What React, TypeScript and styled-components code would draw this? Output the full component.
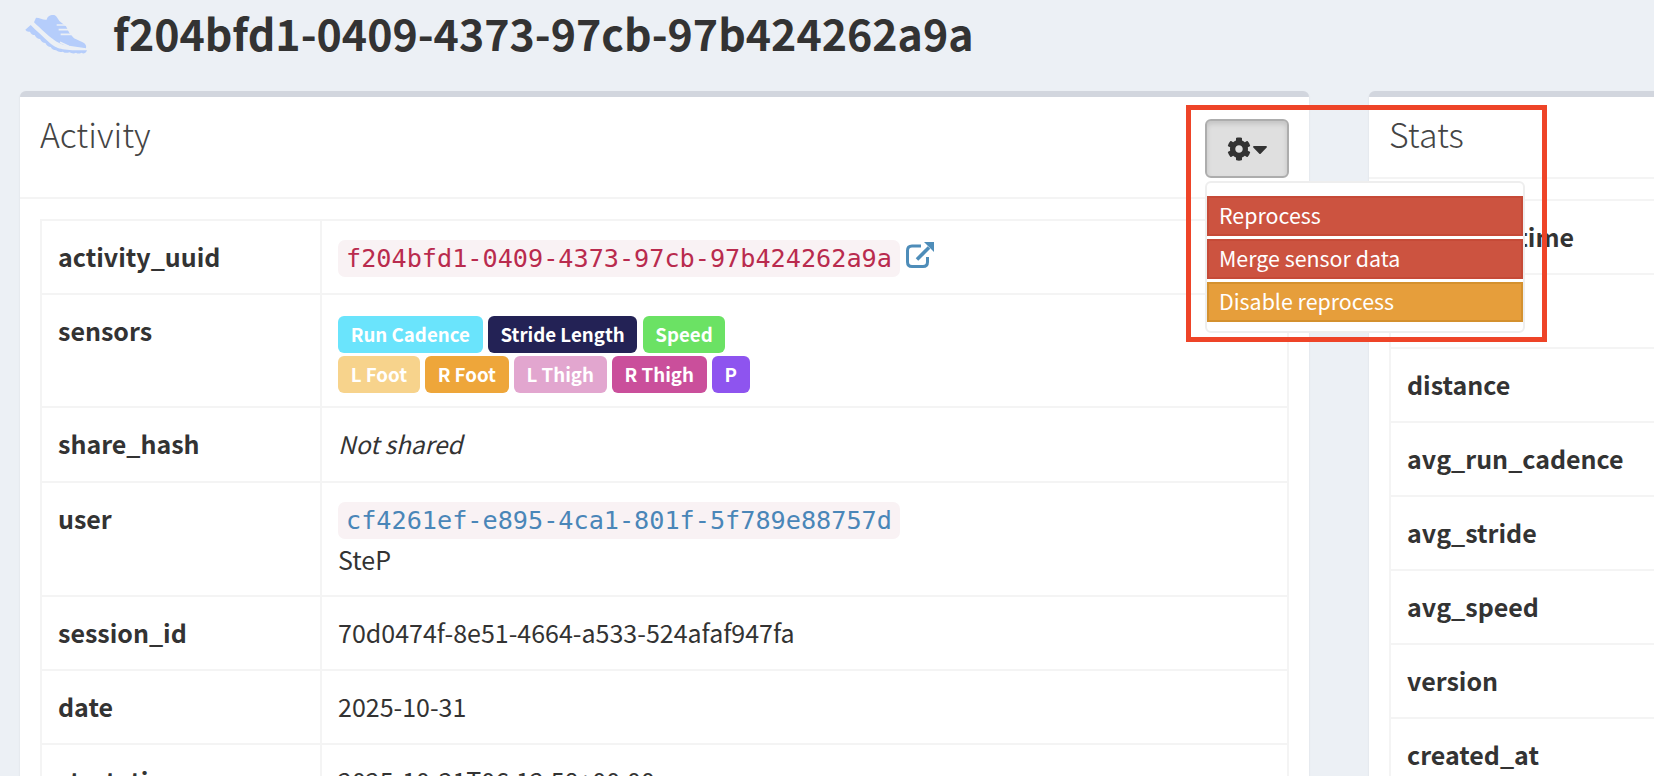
import React from "react";
import styled, { createGlobalStyle } from "styled-components";
import { FaCog, FaCaretDown } from "react-icons/fa";

const Global = createGlobalStyle`
  html, body { margin: 0; padding: 0; height: 776px; overflow: hidden; background: #ecf0f5; }
  body { font-family: "Noto Sans CJK SC", "Noto Sans", sans-serif; color: #333; font-size: 25px; }
`;
const Page = styled.div`
  position: relative;
  width: 1654px;
  height: 776px;
  overflow: hidden;
  padding: 0 0 0 20px;
  box-sizing: border-box;
`;
const TitleBar = styled.div`
  display: flex;
  align-items: center;
  height: 71px;
  gap: 3px;
  margin-left: -10px;
`;
const ShoeIcon = styled.svg`
  flex: none;
  width: 100px;
  height: 70px;
  color: #b5cdfb;
`;
const Title = styled.h1`
  margin: 0 0 8px;
  font-size: 42.9px;
  line-height: 50px;
  font-weight: 700;
`;
const Columns = styled.div`
  display: flex;
  gap: 60px;
  margin-top: 20px;
  align-items: flex-start;
`;
const Card = styled.section<{ $w: number }>`
  flex: none;
  width: ${(p) => p.$w}px;
  box-sizing: border-box;
  background: #fff;
  border-top: 6px solid #d2d6de;
  border-radius: 6px 6px 0 0;
  box-shadow: 0 1px 2px rgba(0, 0, 0, 0.1);
  height: 900px;
`;
const CardHeader = styled.header`
  position: relative;
  display: flex;
  justify-content: space-between;
  align-items: flex-start;
  padding: 22px 20px 19px;
  border-bottom: 2px solid #f4f4f4;
`;
const CardTitle = styled.h3`
  margin: 0 0 10px;
  font-size: 33.8px;
  line-height: 29px;
  font-weight: 300;
  color: #444;
`;
const Menu = styled.div`
  position: relative;
`;
const GearButton = styled.button`
  display: flex;
  align-items: center;
  justify-content: center;
  width: 84px;
  height: 59px;
  box-sizing: border-box;
  padding: 0 0 0 5px;
  background: #dfdfdf;
  border: 2px solid #adadad;
  border-radius: 6px;
  color: #333;
  box-shadow: inset 0 3px 5px rgba(0, 0, 0, 0.125);
  svg { display: block; }
  svg + svg { margin-left: -3px; }
`;
const Dropdown = styled.ul`
  position: absolute;
  z-index: 2;
  top: 62px;
  left: 0;
  width: 320px;
  height: 152px;
  box-sizing: border-box;
  margin: 0;
  padding: 13px 0 0;
  list-style: none;
  background: #fff;
  border: 2px solid #eee;
  border-radius: 6px;
  display: flex;
  flex-direction: column;
  gap: 3px;
`;
const DropItem = styled.li<{ $bg: string; $line: string }>`
  flex: none;
  height: 40px;
  box-sizing: border-box;
  background: ${(p) => p.$bg};
  border: 2px solid ${(p) => p.$line};
  color: #fff;
  font-size: 21.4px;
  line-height: 34px;
  padding-left: 10px;
`;
const CardBody = styled.div`
  padding: 20px;
`;
const Table = styled.table`
  width: 100%;
  border-collapse: collapse;
  table-layout: fixed;
`;
const Label = styled.th<{ $w: number }>`
  width: ${(p) => p.$w}px;
  box-sizing: border-box;
  border: 2px solid #f4f4f4;
  padding: 17px 16px 19px;
  text-align: left;
  vertical-align: top;
  font-size: 25px;
  line-height: 36px;
  font-weight: 700;
  color: #333;
`;
const Value = styled.td`
  border: 2px solid #f4f4f4;
  padding: 17px 16px 19px;
  vertical-align: top;
  font-size: 25px;
  line-height: 36px;
  color: #333;
  white-space: nowrap;
`;
const Code = styled.code<{ $c: string }>`
  display: inline-block;
  margin: 2px 0 -3px;
  font-family: "DejaVu Sans Mono", monospace;
  font-size: 25.2px;
  line-height: 37px;
  padding: 0 8px;
  background: #f9f2f4;
  border-radius: 7px;
  color: ${(p) => p.$c};
  vertical-align: top;
`;
const LinkIcon = styled.svg`
  display: inline-block;
  width: 28px;
  height: 26px;
  margin: 4px 0 0 6px;
  vertical-align: top;
  color: #4e8db9;
`;
const UserName = styled.div`
  margin: 5px 0 -1px;
`;
const BadgeRow = styled.div`
  display: flex;
  gap: 5.2px;
  margin-top: 4px;
  & + & { margin-top: 3px; }
  &:last-child { margin-bottom: -6px; }
`;
const Badge = styled.span<{ $bg: string }>`
  display: block;
  height: 37px;
  line-height: 35px;
  padding: 0 12.7px;
  background: ${(p) => p.$bg};
  border-radius: 6px;
  color: #fff;
  font-size: 18.7px;
  font-weight: 700;
`;
const Highlight = styled.div`
  position: absolute;
  z-index: 3;
  left: 1186px;
  top: 105px;
  width: 361px;
  height: 237px;
  box-sizing: border-box;
  border: 5px solid #ee4428;
  pointer-events: none;
`;
const Note = styled.em`
  font-style: italic;
  font-size: 24.4px;
`;

const Shoe = () => (
  <ShoeIcon viewBox="0 0 300 210" aria-hidden="true">
    <path
      fill="currentColor"
      d="M78 50 C90 50 100 58 110 56 C112 48 118 42 130 42 C138 42 142 50 148 60 L168 76 L178 96 L192 112 L218 124 C226 128 230 134 228 142 L162 132 C140 126 122 110 104 94 C92 82 80 72 72 64 Z"
    />
    <path
      stroke="#ecf0f5"
      strokeWidth="5"
      fill="none"
      d="M140 72 L172 72 M146 86 L178 86 M152 100 L184 100 M150 124 L176 136"
    />
    <path
      fill="currentColor"
      d="M46 86 L62 72 C78 88 98 106 122 128 C140 143 160 149 231 148 L228 154 Q222 160 214 155 Q206 160 198 155 Q190 160 178 154 Q168 158 158 152 Q148 156 138 148 Q128 148 122 138 Q112 138 106 126 Q96 126 90 114 Q80 114 74 102 Q64 102 60 92 Q50 94 46 86 Z"
    />
  </ShoeIcon>
);

const ExternalLink = () => (
  <LinkIcon viewBox="0 0 28 26" aria-hidden="true">
    <path
      fill="none"
      stroke="currentColor"
      strokeWidth="3"
      d="M15 4 H6 Q1.5 4 1.5 8.5 V20 Q1.5 24.5 6 24.5 H17 Q21.5 24.5 21.5 20 V15"
    />
    <path fill="none" stroke="currentColor" strokeWidth="3.6" d="M11 17.5 L23 5.5" />
    <path fill="currentColor" d="M18 0 H28 V10 Z" />
  </LinkIcon>
);

const activity: [string, React.ReactNode][] = [
  ["activity_uuid", <><Code $c="#b92b4e">f204bfd1-0409-4373-97cb-97b424262a9a</Code><ExternalLink /></>],
  ["sensors", <>
    <BadgeRow>
      <Badge $bg="#6ae4fc">Run Cadence</Badge>
      <Badge $bg="#232255">Stride Length</Badge>
      <Badge $bg="#6be264">Speed</Badge>
    </BadgeRow>
    <BadgeRow>
      <Badge $bg="#f7d38c">L Foot</Badge>
      <Badge $bg="#eea63a">R Foot</Badge>
      <Badge $bg="#e2a6cf">L Thigh</Badge>
      <Badge $bg="#ca4f9b">R Thigh</Badge>
      <Badge $bg="#8e54ef">P</Badge>
    </BadgeRow>
  </>],
  ["share_hash", <Note>Not shared</Note>],
  ["user", <><Code $c="#4a86b8">cf4261ef-e895-4ca1-801f-5f789e88757d</Code><UserName>SteP</UserName></>],
  ["session_id", "70d0474f-8e51-4664-a533-524afaf947fa"],
  ["date", "2025-10-31"],
  ["start_time", "2025-10-31T06:12:58+00:00"],
];
const stats: string[] = ["elapsed_time", "duration", "distance", "avg_run_cadence", "avg_stride", "avg_speed", "version", "created_at"];

export default function App() {
  return (
    <Page>
      <Global />
      <TitleBar>
        <Shoe />
        <Title>f204bfd1-0409-4373-97cb-97b424262a9a</Title>
      </TitleBar>
      <Columns>
        <Card $w={1289}>
          <CardHeader>
            <CardTitle>Activity</CardTitle>
            <Menu>
              <GearButton aria-label="Actions">
                <FaCog size={24} />
                <FaCaretDown size={24} />
              </GearButton>
              <Dropdown>
                <DropItem $bg="#cc5340" $line="#c64a37">Reprocess</DropItem>
                <DropItem $bg="#cc5340" $line="#c64a37">Merge sensor data</DropItem>
                <DropItem $bg="#e69e3b" $line="#d4912f">Disable reprocess</DropItem>
              </Dropdown>
            </Menu>
          </CardHeader>
          <CardBody>
            <Table>
              <tbody>
                {activity.map(([k, v]) => (
                  <tr key={k}><Label $w={280}>{k}</Label><Value>{v}</Value></tr>
                ))}
              </tbody>
            </Table>
          </CardBody>
        </Card>
        <Card $w={700}>
          <CardHeader>
            <CardTitle>Stats</CardTitle>
          </CardHeader>
          <CardBody>
            <Table>
              <tbody>
                {stats.map((k) => (
                  <tr key={k}><Label $w={300}>{k}</Label><Value>&nbsp;</Value></tr>
                ))}
              </tbody>
            </Table>
          </CardBody>
        </Card>
      </Columns>
      <Highlight />
    </Page>
  );
}
